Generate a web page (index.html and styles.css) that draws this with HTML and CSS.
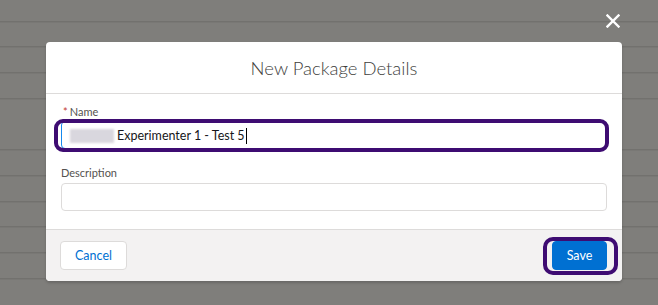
FILE: index.html
```html
<!DOCTYPE html>
<html>
<head>
<meta charset="utf-8">
<link rel="stylesheet" href="styles.css">
</head>
<body>
<div class="backdrop">
  <button class="close" aria-label="Close">
    <svg width="14" height="14" viewBox="0 0 14 14"><path d="M1.5 1.5 L12.5 12.5 M12.5 1.5 L1.5 12.5" stroke="#fff" stroke-width="2.4" stroke-linecap="square"/></svg>
  </button>
  <div class="modal">
    <header class="modal-header">
      <h2 class="title">New Package Details</h2>
    </header>
    <div class="modal-body">
      <div class="field">
        <label class="label"><abbr class="req">*</abbr>Name</label>
        <div class="input focus">
          <span class="blur"></span><span class="value">Experimenter 1 - Test 5</span><span class="caret"></span>
        </div>
      </div>
      <div class="field second">
        <label class="label plain">Description</label>
        <div class="input"></div>
      </div>
    </div>
    <footer class="modal-footer">
      <button class="btn neutral">Cancel</button>
      <button class="btn brand">Save</button>
    </footer>
  </div>
</div>
</body>
</html>
```
FILE: styles.css
```css
html, body {
  margin: 0;
  padding: 0;
}
body {
  width: 658px;
  height: 305px;
  overflow: hidden;
  font-family: Lato, "Noto Sans", sans-serif;
  background-color: #7f7e7b;
  background-image: repeating-linear-gradient(to bottom, transparent 0 24.7px, #6c6b68 24.7px 25.7px);
  background-position: 0 -3.7px;
}
.backdrop {
  position: relative;
  padding: 42px 36px 0 46px;
}
.close {
  position: absolute;
  left: 606px;
  top: 14px;
  width: 14px;
  height: 14px;
  padding: 0;
  border: 0;
  background: none;
  display: block;
}
.close svg { display: block; }
.modal {
  width: 576px;
  background: #fff;
  border-radius: 4px;
  box-shadow: 0 2px 3px rgba(0,0,0,0.18);
  overflow: visible;
}
.modal-header {
  height: 51px;
  border-bottom: 1px solid #dddbda;
  display: flex;
  align-items: center;
  justify-content: center;
}
.title {
  margin: 0;
  font-size: 18.5px;
  font-weight: 300;
  color: #3e3e3c;
  padding-top: 1px;
}
.modal-body {
  padding: 10px 15px 18px 15px;
}
.field.second {
  margin-top: 16px;
}
.label {
  display: block;
  height: 16px;
  line-height: 16px;
  font-size: 11px;
  color: #54524f;
  margin-bottom: 1px;
  padding-left: 2px;
}
.label.plain {
  padding-left: 0;
  margin-bottom: 2px;
}
.req {
  color: #c23934;
  text-decoration: none;
  border: 0;
  margin-right: 2px;
  font-size: 11px;
}
.input {
  height: 26px;
  border: 1px solid #dddbda;
  border-radius: 4px;
  background: #fff;
  display: flex;
  align-items: center;
  padding-left: 8px;
}
.input.focus {
  position: relative;
  border-color: #1589ee;
}
.input.focus::after {
  content: "";
  position: absolute;
  left: -8px;
  right: -3px;
  top: -3px;
  bottom: -4px;
  border: 4px solid #3e0c72;
  border-radius: 9px;
}
.blur {
  display: inline-block;
  width: 44px;
  height: 14px;
  background: #d9d7de;
  filter: blur(1px);
  margin-right: 3px;
  margin-top: 2px;
}
.value {
  font-size: 12.5px;
  color: #16161a;
  line-height: 16px;
  padding-top: 2px;
}
.caret {
  display: inline-block;
  width: 1px;
  height: 16px;
  background: #000;
  margin-left: 1px;
  margin-top: 2px;
}
.modal-footer {
  border-top: 1px solid #dddbda;
  background: #f3f2f2;
  border-radius: 0 0 4px 4px;
  padding: 11px 15px 11px 14px;
  display: flex;
  justify-content: space-between;
  align-items: center;
}
.btn {
  height: 29px;
  border-radius: 4px;
  font-family: Lato, "Noto Sans", sans-serif;
  font-size: 12.5px;
  padding: 0;
  cursor: pointer;
}
.btn.neutral {
  width: 67px;
  background: #fff;
  border: 1px solid #dddbda;
  color: #0070d2;
}
.btn.brand {
  position: relative;
  width: 55px;
  background: #0070d2;
  border: 1px solid #0070d2;
  color: #fff;
}
.btn.brand::after {
  content: "";
  position: absolute;
  left: -10px;
  right: -12px;
  top: -5px;
  bottom: -6px;
  border: 4px solid #3e0c72;
  border-radius: 10px;
}
```
